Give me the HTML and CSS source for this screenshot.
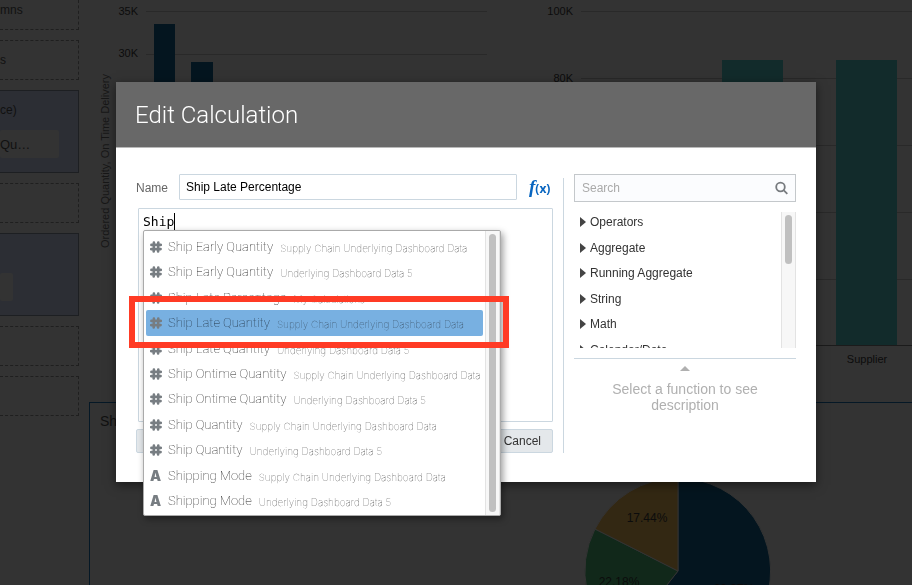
FILE: index.html
```html
<!DOCTYPE html>
<html lang="en">
<head>
<meta charset="utf-8">
<title>Edit Calculation</title>
<link rel="stylesheet" href="styles.css">
</head>
<body>
<div class="dashboard">
  <aside class="shelves">
    <div class="shelf first">mns</div>
    <div class="shelf">s</div>
    <div class="shelf filled"><span class="shelf-name">ce)</span><span class="pill wide">Qu…</span></div>
    <div class="shelf"></div>
    <div class="shelf filled"><span class="shelf-name"></span><span class="pill"></span></div>
    <div class="shelf"></div>
    <div class="shelf"></div>
  </aside>
  <main class="canvas">
    <div class="charts">
      <svg class="chart-left" width="410" height="402">
        <path class="grid" d="M57 11.5H398M57 54.5H398M57 97.5H398"/>
        <path class="navy" d="M65 24h21v200h-21zM102 62h22v200h-22z"/>
        <text x="49" y="15" class="tick">35K</text>
        <text x="49" y="57" class="tick">30K</text>
        <text class="axis" transform="translate(20 248) rotate(-90)">Ordered Quantity, On Time Delivery</text>
      </svg>
      <svg class="chart-right" height="402">
        <path class="grid" d="M82 11.5H700M82 78.5H700M82 145.5H700M82 212.5H700M82 279.5H700"/>
        <path class="teal" d="M223 60h61v285h-61zM337 60h61v285h-61z"/>
        <path class="base" d="M82 345.5H700"/>
        <text x="74" y="15" class="tick">100K</text>
        <text x="74" y="82" class="tick">80K</text>
        <text x="368" y="363" class="category">Supplier</text>
      </svg>
    </div>
    <section class="pie-panel">
      <h2>Ship</h2>
      <svg class="pie" width="190" height="190" viewBox="0 0 190 190">
        <path class="navy slice" d="M95 95V2A93 93 0 1 1 37 168Z"/>
        <path class="green slice" d="M95 95L37 168A93 93 0 0 1 12 53Z"/>
        <path class="gold slice" d="M95 95L12 53A93 93 0 0 1 95 2Z"/>
        <text x="64" y="46">17.44%</text>
        <text x="36" y="110">22.18%</text>
        <text x="151" y="117">60.37%</text>
      </svg>
    </section>
  </main>
</div>

<div class="overlay">
  <div class="dialog" role="dialog" aria-labelledby="title">
    <header class="dialog-head"><h1 id="title">Edit Calculation</h1></header>
    <div class="dialog-body">
      <div class="editor">
        <div class="name-row">
          <label for="name">Name</label>
          <input id="name" type="text" value="Ship Late Percentage">
          <button class="fx" aria-label="Functions"><i>f</i><b>(x)</b></button>
        </div>
        <div class="formula">
          <div class="code">Ship<span class="caret"></span></div>
          <div class="menu">
            <ul class="options">
              <li><svg class="ic"><use href="#hash"/></svg><span>Ship Early Quantity</span><small>Supply Chain Underlying Dashboard Data</small></li>
              <li><svg class="ic"><use href="#hash"/></svg><span>Ship Early Quantity</span><small>Underlying Dashboard Data 5</small></li>
              <li><svg class="ic"><use href="#hash"/></svg><span>Ship Late Percentage</span><small>My Calculations</small></li>
              <li class="selected"><svg class="ic"><use href="#hash"/></svg><span>Ship Late Quantity</span><small>Supply Chain Underlying Dashboard Data</small></li>
              <li><svg class="ic"><use href="#hash"/></svg><span>Ship Late Quantity</span><small>Underlying Dashboard Data 5</small></li>
              <li><svg class="ic"><use href="#hash"/></svg><span>Ship Ontime Quantity</span><small>Supply Chain Underlying Dashboard Data</small></li>
              <li><svg class="ic"><use href="#hash"/></svg><span>Ship Ontime Quantity</span><small>Underlying Dashboard Data 5</small></li>
              <li><svg class="ic"><use href="#hash"/></svg><span>Ship Quantity</span><small>Supply Chain Underlying Dashboard Data</small></li>
              <li><svg class="ic"><use href="#hash"/></svg><span>Ship Quantity</span><small>Underlying Dashboard Data 5</small></li>
              <li><b class="ic letter">A</b><span>Shipping Mode</span><small>Supply Chain Underlying Dashboard Data</small></li>
              <li><b class="ic letter">A</b><span>Shipping Mode</span><small>Underlying Dashboard Data 5</small></li>
            </ul>
            <div class="track"><div class="thumb"></div></div>
            <div class="callout"></div>
          </div>
        </div>
        <div class="actions">
          <button class="btn" aria-label="Validate"></button>
          <button class="btn">Cancel</button>
        </div>
      </div>
      <div class="functions">
        <div class="search">
          <input type="search" aria-label="Search" placeholder="Search">
          <svg width="14" height="14" viewBox="0 0 14 14"><circle cx="5.5" cy="6" r="4.3"/><path d="M8.8 9.3L12.3 12.8"/></svg>
        </div>
        <div class="tree">
          <ul>
            <li>Operators</li>
            <li>Aggregate</li>
            <li>Running Aggregate</li>
            <li>String</li>
            <li>Math</li>
            <li>Calendar/Date</li>
          </ul>
          <div class="track"><div class="thumb"></div></div>
        </div>
        <div class="hint"><span class="up"></span><p>Select a function to see description</p></div>
      </div>
    </div>
  </div>
</div>
<svg class="defs"><symbol id="hash" viewBox="0 0 12 12"><path d="M3.9 1.5L3.7 10.5M8.3 1.5L8.1 10.5M1.4 3.9H10.8M1.2 8.1H10.6" fill="none" stroke="currentColor" stroke-width="2.6" stroke-linecap="round"/></symbol></svg>
</body>
</html>
```

FILE: styles.css
```css
* { box-sizing: border-box; }
body {
  margin: 0;
  height: 100vh;
  overflow: hidden;
  background: #333;
  color: #111;
  font: 12px "Liberation Sans", Arial, sans-serif;
}
h1, h2, p, ul { margin: 0; padding: 0; }
ul { list-style: none; }
button, input { font: inherit; }
.defs { display: none; }

.dashboard { display: flex; height: 100%; }
.shelves {
  width: 79px;
  margin-right: 10px;
  flex: none;
  display: flex;
  flex-direction: column;
  gap: 10px;
}
.shelf {
  height: 40px;
  flex: none;
  display: flex;
  align-items: center;
  border: 1px dashed #1f1f1f;
  border-left: 0;
  font-size: 12px;
}
.shelf.first { height: 30px; border-top: 0; padding-bottom: 10px; }
.shelf.filled {
  height: 83px;
  flex-direction: column;
  align-items: flex-start;
  background: #2c2e34;
  border: 1px solid #1d1f22;
  border-left: 0;
  padding-top: 12px;
}
.shelf-name { height: 27px; line-height: 15px; }
.pill { width: 13px; height: 28px; line-height: 30px; border-radius: 2px; background: #333; }
.pill.wide { width: 59px; font-size: 13px; }
.canvas { flex: 1; min-width: 0; display: flex; flex-direction: column; }
.charts { display: flex; height: 402px; flex: none; }
.chart-left { flex: none; }
.chart-right { flex: 1; min-width: 0; }
.grid { stroke: #292929; }
.base { stroke: #1b1b1b; }
.navy { fill: #04151f; }
.teal { fill: #122b2b; }
.green { fill: #11281a; }
.gold { fill: #332813; }
.slice { stroke: #333; }
text { fill: #0c0c0c; font-size: 11px; }
.tick { text-anchor: end; }
.axis { fill: #171717; }
.category { text-anchor: middle; }
.pie-panel { flex: 1; overflow: hidden; border: solid #051826; border-width: 1px 0 0 1px; }
.pie-panel h2 { padding: 10px; font-size: 14px; font-weight: 400; }
.pie { display: block; margin: 37px 0 0 493px; }
.pie text { font-size: 12px; text-anchor: middle; }

.overlay { position: fixed; inset: 0; padding: 82px 96px 0 116px; }
.dialog { background: #fff; box-shadow: 0 3px 10px rgba(0, 0, 0, .5); }
.dialog-head {
  height: 66px;
  display: flex;
  align-items: center;
  padding-left: 19px;
  background: #686868;
  border-bottom: 1px solid #b9b9b9;
}
.dialog-head h1 { color: #fff; font: 300 24px Roboto, sans-serif; }
.dialog-body { display: flex; padding: 26px 20px 29px; height: 334px; }
.editor { flex: 1; min-width: 0; }
.name-row { display: flex; align-items: center; height: 26px; }
.name-row label { width: 43px; padding-top: 2px; color: #666; }
.name-row input {
  flex: 1;
  min-width: 0;
  height: 26px;
  padding: 0 6px;
  border: 1px solid #cbd7e0;
  border-radius: 1px;
  color: #000;
}
.fx {
  width: 36px;
  padding: 0 0 0 12px;
  border: 0;
  background: none;
  color: #0865c0;
  font: 12px "Open Sans", sans-serif;
  line-height: 20px;
  text-align: left;
  white-space: nowrap;
}
.fx i { font: italic bold 19px "Liberation Serif", serif; }
.formula {
  position: relative;
  height: 214px;
  margin: 8px 0 0 2px;
  border: 1px solid #cbd7e0;
  border-radius: 1px;
}
.code { display: flex; padding: 4px; color: #000; font: 13px/17px "DejaVu Sans Mono", monospace; }
.caret { width: 1px; background: #000; }
.menu {
  position: absolute;
  left: 4px;
  top: 21px;
  width: 358px;
  height: 286px;
  display: flex;
  background: #fff;
  border: 1px solid #aaa;
  border-radius: 2px;
  box-shadow: 2px 3px 7px rgba(0, 0, 0, .4);
}
.options { flex: 1; min-width: 0; display: flex; flex-direction: column; padding: 3px 2px 1px; }
.options li {
  flex: 1;
  display: flex;
  align-items: center;
  padding-left: 4px;
  white-space: nowrap;
  border-radius: 2px;
  color: #222;
  font: 100 13px/20px Roboto, sans-serif;
}
.options .selected { background: #78b0e1; color: #234; }
.ic { width: 12px; height: 12px; flex: none; color: #777d82; }
.letter { font: 900 14px/12px Inter, sans-serif; }
.options span { margin: 0 7px 0 6px; }
.options small { padding-top: 2px; font: 100 10px/18px Inter, sans-serif; color: #444; }
.options .selected small { color: #345; }
.track { width: 15px; flex: none; padding: 3px; background: #f7f7f7; border: solid #e3e3e3; border-width: 0 1px; }
.thumb { height: 100%; border-radius: 4px; background: #c0c0c0; }
.callout { position: absolute; left: -15px; top: 65px; width: 380px; height: 52px; border: 6px solid #ff3b25; }
.actions { display: flex; justify-content: space-between; margin-top: 7px; }
.btn {
  height: 24px;
  min-width: 60px;
  padding: 0 11px;
  background: #e4e8eb;
  border: 1px solid #cbd7e0;
  border-radius: 2px;
  color: #333;
}

.functions {
  width: 233px;
  flex: none;
  display: flex;
  flex-direction: column;
  margin: 4px 0 0 10px;
  padding-left: 10px;
  border-left: 1px solid #cbd7e0;
}
.search { display: flex; flex: none; align-items: center; height: 28px; margin-top: -4px; padding: 0 6px 0 7px; border: 1px solid #c4c8cb; background: #fbfcfe; }
.search input { flex: 1; min-width: 0; padding: 0; border: 0; outline: 0; background: none; }
.search input::placeholder { color: #aaa; }
.search svg { fill: none; stroke: #777b7f; stroke-width: 1.8; }
.tree { display: flex; height: 136px; flex: none; margin-top: 10px; overflow: hidden; }
.tree ul { flex: 1; height: 148px; padding: 0 6px; display: flex; flex-direction: column; justify-content: space-between; }
.tree li { display: flex; align-items: center; height: 20px; color: #333; }
.tree li::before { content: ""; margin-right: 4px; border: solid transparent; border-width: 5px 0 5px 6px; border-left-color: #444; }
.tree .thumb { height: 49px; }
.hint { margin-top: 10px; padding-top: 7px; border-top: 1px solid #cbd7e0; text-align: center; color: #b0b0b0; font-size: 14px; line-height: 16px; }
.hint p { padding: 10px 30px 0; }
.up { display: block; width: 0; margin: 0 auto; border: solid transparent; border-width: 0 5px 5px; border-bottom-color: #b0b0b0; }
```
